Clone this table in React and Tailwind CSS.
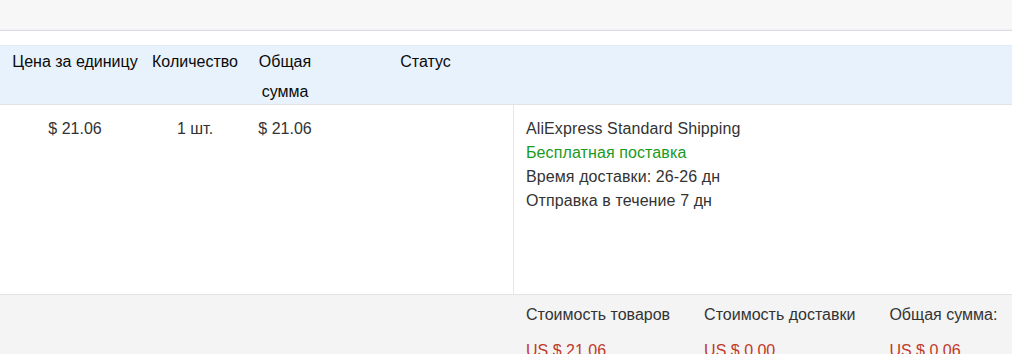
const columns = [
  { label: "Цена за единицу", value: "$ 21.06", width: "w-[150px]" },
  { label: "Количество", value: "1 шт.", width: "w-[90px]" },
  { label: "Общая сумма", value: "$ 21.06", width: "w-[90px] px-[10px]" },
]

const totals = [
  { label: "Стоимость товаров", value: "US $ 21.06" },
  { label: "Стоимость доставки", value: "US $ 0.00" },
  { label: "Общая сумма:", value: "US $ 0.06" },
]

export default function App() {
  return (
    <div className="w-[1012px] h-[354px] overflow-hidden bg-white text-[16px] text-[#333] font-['Liberation_Sans',Arial,sans-serif]">
      {/* top strip */}
      <div className="h-[30px] bg-[#f7f7f7] border-b border-[#efeff7]" />
      <div className="h-px bg-[#dcdce6]" />
      <div className="h-[14px] bg-white" />

      {/* table head */}
      <div className="flex h-[60px] pt-px bg-[#e8f2fd] border-t border-[#e0ecf8] border-b border-b-[#e3e3e3] leading-[30px] text-[#0a0a0a]">
        {columns.map((c) => (
          <div key={c.label} className={`${c.width} text-center`}>
            {c.label}
          </div>
        ))}
        <div className="w-[183px] pl-[8px] text-center">Статус</div>
        <div className="flex-1" />
      </div>

      {/* order row */}
      <div className="flex h-[189px]">
        {columns.map((c) => (
          <div key={c.label} className={`${c.width} pt-[12px] leading-[24px] text-center`}>
            {c.value}
          </div>
        ))}
        <div className="w-[183px]" />
        <div className="flex-1 border-l border-[#e8e8e8] pl-[12px] pt-[12px] leading-[24px] tracking-[0.1px]">
          <div>AliExpress Standard Shipping</div>
          <div className="text-[#1a9a1e]">Бесплатная поставка</div>
          <div>Время доставки: 26-26 дн</div>
          <div>Отправка в течение 7 дн</div>
        </div>
      </div>

      {/* totals */}
      <div className="flex h-[60px] bg-[#f4f4f4] border-t border-[#e3e3e3] pl-[526px] pt-[8px] gap-[34px] leading-[24px]">
        {totals.map((t) => (
          <div key={t.label} className="flex flex-col gap-[12px]">
            <div>{t.label}</div>
            <div className="text-[#c0392b]">{t.value}</div>
          </div>
        ))}
      </div>
    </div>
  )
}
